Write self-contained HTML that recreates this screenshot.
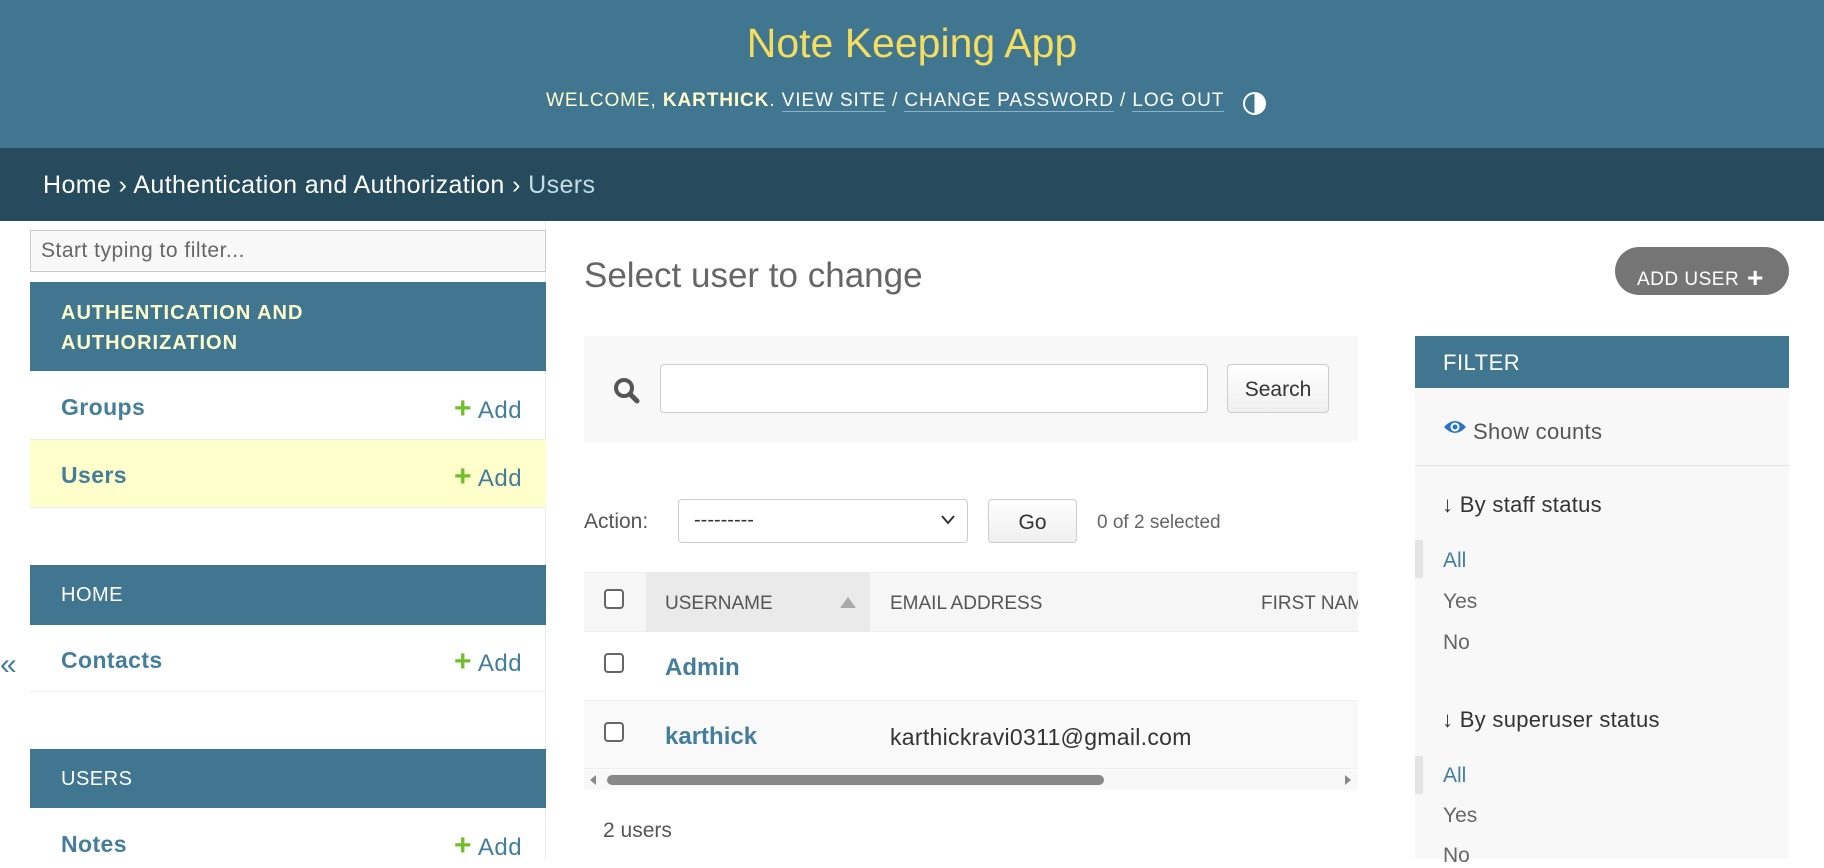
<!DOCTYPE html>
<html><head><meta charset="utf-8"><style>
*{box-sizing:border-box;margin:0;padding:0}
body{width:1824px;height:859px;overflow:hidden;background:#fff;font-family:"Liberation Sans","DejaVu Sans",sans-serif;position:relative;color:#333}
.a{position:absolute;white-space:nowrap}
a{text-decoration:none}
</style></head><body>
<div class="a" style="left:0;top:0;width:1824px;height:148px;background:#417690"></div>
<div class="a" style="left:0;top:20px;width:1824px;text-align:center;color:#f5dd5d;font-size:41px;font-weight:300">Note Keeping App</div>
<div class="a" style="left:546px;top:90px;font-size:19px;color:#ffc;letter-spacing:.9px">WELCOME, <b>KARTHICK</b>. <span style="color:#fff;border-bottom:1px solid #8fb0c2">VIEW SITE</span> / <span style="color:#fff;border-bottom:1px solid #8fb0c2">CHANGE PASSWORD</span> / <span style="color:#fff;border-bottom:1px solid #8fb0c2">LOG OUT</span></div>
<div class="a" style="left:1243px;top:92px;width:23px;height:23px;border-radius:50%;border:2.5px solid #fff;background:linear-gradient(90deg,transparent 50%,#fff 50%)"></div>
<div class="a" style="left:0;top:148px;width:1824px;height:73px;background:#264b5d"></div>
<div class="a" style="left:43px;top:171px;font-size:25px;letter-spacing:.4px;color:#fff">Home › Authentication and Authorization › <span style="color:#c4dce8">Users</span></div>

<!-- sidebar -->
<div class="a" style="left:30px;top:221px;width:516px;height:638px;border-right:1px solid #eaeaea"></div>
<div class="a" style="left:30px;top:230px;width:516px;height:42px;border:1px solid #ccc;background:#f8f8f8;font-size:21px;color:#666;padding:8px 10px;letter-spacing:.5px">Start typing to filter...</div>
<div class="a" style="left:30px;top:282px;width:516px;height:89px;background:#417690;color:#ffc;font-weight:bold;font-size:20px;line-height:30px;padding:16px 31px;letter-spacing:1px;white-space:normal">AUTHENTICATION AND<br>AUTHORIZATION</div>
<div class="a" style="left:30px;top:371px;width:516px;height:69px;border-bottom:1px solid #eee"></div>
<div class="a" style="left:30px;top:440px;width:516px;height:68px;background:#ffc;border-bottom:1px solid #eee"></div>
<div class="a" style="left:30px;top:565px;width:516px;height:60px;background:#417690;color:#fff;font-size:20px;padding:19px 31px;letter-spacing:.5px">HOME</div>
<div class="a" style="left:30px;top:625px;width:516px;height:67px;border-bottom:1px solid #eee"></div>
<div class="a" style="left:30px;top:749px;width:516px;height:59px;background:#417690;color:#fff;font-size:20px;padding:19px 31px;letter-spacing:.5px">USERS</div>
<div class="a" style="left:61px;top:394px;font-size:23px;font-weight:bold;color:#447e9b;letter-spacing:.4px">Groups</div>
<div class="a" style="left:61px;top:462px;font-size:23px;font-weight:bold;color:#447e9b;letter-spacing:.4px">Users</div>
<div class="a" style="left:61px;top:647px;font-size:23px;font-weight:bold;color:#447e9b;letter-spacing:.4px">Contacts</div>
<div class="a" style="left:61px;top:831px;font-size:23px;font-weight:bold;color:#447e9b;letter-spacing:.4px">Notes</div>
<div class="a" style="left:454px;top:392px;font-size:24px;color:#447e9b;letter-spacing:.5px"><b style="color:#70bf2b;font-size:30px">+</b> Add</div>
<div class="a" style="left:454px;top:460px;font-size:24px;color:#447e9b;letter-spacing:.5px"><b style="color:#70bf2b;font-size:30px">+</b> Add</div>
<div class="a" style="left:454px;top:645px;font-size:24px;color:#447e9b;letter-spacing:.5px"><b style="color:#70bf2b;font-size:30px">+</b> Add</div>
<div class="a" style="left:454px;top:829px;font-size:24px;color:#447e9b;letter-spacing:.5px"><b style="color:#70bf2b;font-size:30px">+</b> Add</div>
<div class="a" style="left:0;top:648px;font-size:30px;color:#447e9b">«</div>

<!-- main -->
<div class="a" style="left:584px;top:256px;font-size:35px;font-weight:300;color:#666">Select user to change</div>
<div class="a" style="left:1615px;top:247px;width:174px;height:48px;border-radius:24px;background:#757575;color:#fff;font-size:19px;padding:13px 0 0 22px;letter-spacing:.5px">ADD USER <b style="font-size:28px;position:relative;top:2px;left:2px">+</b></div>
<div class="a" style="left:584px;top:336px;width:774px;height:106px;background:#f8f8f8"></div>
<svg class="a" style="left:613px;top:377px" width="28" height="28" viewBox="0 0 28 28"><circle cx="11" cy="11" r="8" fill="none" stroke="#555" stroke-width="4"/><path d="M17 17L24 24" stroke="#555" stroke-width="5" stroke-linecap="round"/></svg>
<div class="a" style="left:660px;top:364px;width:548px;height:49px;border:1px solid #ccc;border-radius:4px;background:#fff"></div>
<div class="a" style="left:1227px;top:364px;width:102px;height:49px;border:1px solid #ccc;border-radius:4px;background:linear-gradient(#fff,#efefef);font-size:21px;text-align:center;padding-top:13px">Search</div>

<div class="a" style="left:584px;top:510px;font-size:21px;color:#555">Action:</div>
<div class="a" style="left:678px;top:499px;width:290px;height:44px;border:1px solid #ccc;border-radius:4px;background:#fff;font-size:20px;padding:9px 15px">---------</div>
<svg class="a" style="left:940px;top:514px" width="16" height="12"><path d="M2 2L8 9L14 2" fill="none" stroke="#333" stroke-width="2"/></svg>
<div class="a" style="left:988px;top:499px;width:89px;height:44px;border:1px solid #ccc;border-radius:4px;background:linear-gradient(#fff,#efefef);font-size:21px;text-align:center;padding-top:11px">Go</div>
<div class="a" style="left:1097px;top:512px;font-size:19px;color:#666">0 of 2 selected</div>

<div class="a" style="left:584px;top:572px;width:774px;height:60px;background:#f6f6f6;border-top:1px solid #eee;border-bottom:1px solid #eee"></div>
<div class="a" style="left:646px;top:572px;width:224px;height:60px;background:#eaeaea"></div>
<div class="a" style="left:604px;top:589px;width:20px;height:20px;border:2px solid #666;border-radius:4px;background:#fff"></div>
<div class="a" style="left:665px;top:593px;font-size:19px;color:#555">USERNAME</div>
<div class="a" style="left:840px;top:597px;width:0;height:0;border-left:8px solid transparent;border-right:8px solid transparent;border-bottom:11px solid #aaa"></div>
<div class="a" style="left:890px;top:593px;font-size:19px;color:#555">EMAIL ADDRESS</div>
<div class="a" style="left:1261px;top:593px;width:97px;overflow:hidden;font-size:19px;color:#555">FIRST NAME</div>
<div class="a" style="left:584px;top:700px;width:774px;height:69px;background:#f9f9f9;border-top:1px solid #eee;border-bottom:1px solid #eee"></div>
<div class="a" style="left:604px;top:653px;width:20px;height:20px;border:2px solid #666;border-radius:4px;background:#fff"></div>
<div class="a" style="left:665px;top:654px;font-size:24px;font-weight:bold;color:#447e9b">Admin</div>
<div class="a" style="left:604px;top:722px;width:20px;height:20px;border:2px solid #666;border-radius:4px;background:#fff"></div>
<div class="a" style="left:665px;top:723px;font-size:24px;font-weight:bold;color:#447e9b">karthick</div>
<div class="a" style="left:890px;top:724px;font-size:23px;color:#333;letter-spacing:.3px">karthickravi0311@gmail.com</div>
<div class="a" style="left:584px;top:770px;width:774px;height:20px;background:#f8f8f8"></div>
<div class="a" style="left:607px;top:775px;width:497px;height:10px;border-radius:5px;background:#888"></div>
<div class="a" style="left:590px;top:775px;border-top:5px solid transparent;border-bottom:5px solid transparent;border-right:6px solid #888"></div>
<div class="a" style="left:1345px;top:775px;border-top:5px solid transparent;border-bottom:5px solid transparent;border-left:6px solid #888"></div>
<div class="a" style="left:603px;top:819px;font-size:21px;color:#555">2 users</div>

<!-- filter -->
<div class="a" style="left:1415px;top:336px;width:374px;height:523px;background:#f8f8f8"></div>
<div class="a" style="left:1415px;top:336px;width:374px;height:52px;background:#417690;color:#fff;font-size:22px;padding:14px 28px;letter-spacing:.5px">FILTER</div>
<svg class="a" style="left:1443px;top:418px" width="24" height="18" viewBox="0 0 24 18"><path d="M1 9Q12 -3 23 9Q12 21 1 9Z" fill="#2a73c8"/><circle cx="12" cy="9" r="4.5" fill="#fff"/><circle cx="12" cy="9" r="2.5" fill="#2a73c8"/></svg>
<div class="a" style="left:1473px;top:419px;font-size:22px;color:#555;letter-spacing:.3px">Show counts</div>
<div class="a" style="left:1415px;top:465px;width:374px;height:1px;background:#e4e4e4"></div>
<div class="a" style="left:1442px;top:492px;font-size:22px;color:#333;letter-spacing:.3px">↓ By staff status</div>
<div class="a" style="left:1415px;top:540px;width:8px;height:38px;background:#e4e4e4"></div>
<div class="a" style="left:1443px;top:549px;font-size:21px;color:#447e9b">All</div>
<div class="a" style="left:1443px;top:590px;font-size:21px;color:#666">Yes</div>
<div class="a" style="left:1443px;top:631px;font-size:21px;color:#666">No</div>
<div class="a" style="left:1442px;top:707px;font-size:22px;color:#333;letter-spacing:.3px">↓ By superuser status</div>
<div class="a" style="left:1415px;top:756px;width:8px;height:38px;background:#e4e4e4"></div>
<div class="a" style="left:1443px;top:764px;font-size:21px;color:#447e9b">All</div>
<div class="a" style="left:1443px;top:804px;font-size:21px;color:#666">Yes</div>
<div class="a" style="left:1443px;top:844px;font-size:21px;color:#666">No</div>
</body></html>
